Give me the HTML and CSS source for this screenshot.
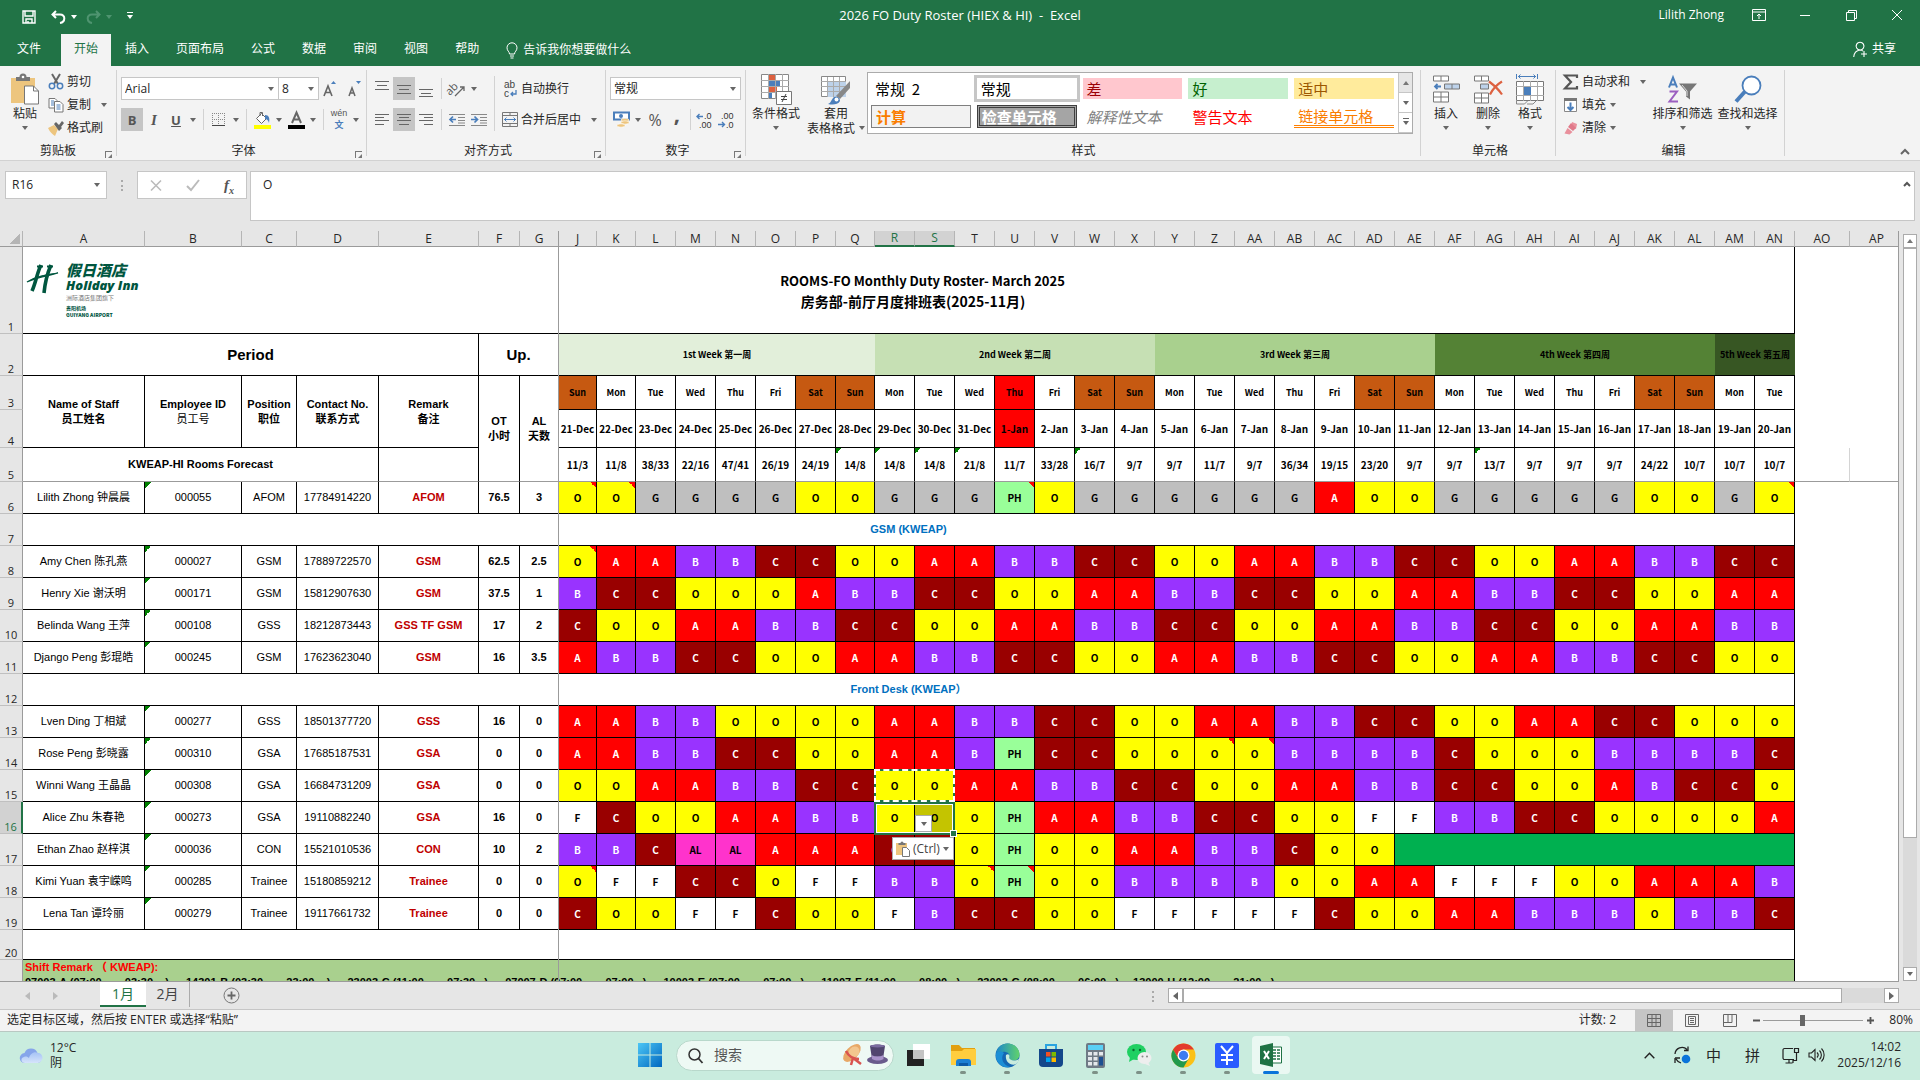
FILE: index.html
```html
<!DOCTYPE html>
<html lang="zh-CN">
<head>
    <meta charset="UTF-8">
    <meta name="viewport" content="width=device-width, initial-scale=1.0">
    <title>2026 FO Duty Roster (HIEX &amp; HI) - Excel</title>
    <link rel="stylesheet" href="styles.css">
</head>
<body>

    <header class="titlebar">
        <div class="quick">
            <button class="q-save" aria-label="保存"><svg width="14" height="14" viewBox="0 0 14 14"><path d="M1 1h12v12H1zM3 1v5h8V1M4 13V9h6v4M6 11v2" fill="none" stroke="#fff" stroke-width="1.400"/></svg></button>
            <button class="q-undo" aria-label="撤消"><svg width="15" height="14" viewBox="0 0 15 14"><path d="M5 1L1.500 4.500 5 8M2 4.500h7c6 0 5.500 7.500 0 8.500" fill="none" stroke="#fff" stroke-width="2"/></svg><i class="caret light"></i></button>
            <button class="q-redo" aria-label="恢复"><svg width="15" height="14" viewBox="0 0 15 14"><path d="M10 1l3.500 3.500L10 8M13 4.500H6c-6 0-5.500 7.500 0 8.500" fill="none" stroke="#4f9470" stroke-width="2"/></svg><i class="caret dim"></i></button>
            <button class="q-more" aria-label="自定义"><i class="caret light bar"></i></button>
        </div>
        <div class="doc-title">2026 FO Duty Roster (HIEX &amp; HI)&nbsp; -&nbsp; Excel</div>
        <div class="window-tools">
            <span class="user">Lilith Zhong</span>
            <button aria-label="功能区显示选项"><svg width="14" height="12" viewBox="0 0 14 12"><path d="M.5.5h13v11H.5zM1 3h12M7 10V5M5 7l2-2 2 2" fill="none" stroke="#fff"/></svg></button>
            <button aria-label="最小化"><svg width="10" height="10" viewBox="0 0 10 10"><path d="M0 5.500h10" stroke="#fff"/></svg></button>
            <button aria-label="还原"><svg width="11" height="11" viewBox="0 0 11 11"><path d="M.5 2.500h8v8h-8zM2.500 2V.5h8v8H9" fill="none" stroke="#fff"/></svg></button>
            <button aria-label="关闭"><svg width="10" height="10" viewBox="0 0 10 10"><path d="M0 0l10 10M10 0L0 10" stroke="#fff"/></svg></button>
        </div>
    </header>

    <nav class="tabs">
        <a href="#" class="file">文件</a>
        <a href="#" class="active">开始</a>
        <a href="#">插入</a>
        <a href="#">页面布局</a>
        <a href="#">公式</a>
        <a href="#">数据</a>
        <a href="#">审阅</a>
        <a href="#">视图</a>
        <a href="#">帮助</a>
        <a href="#" class="tell"><svg width="12" height="17" viewBox="0 0 12 17"><path d="M3.500 12c0-2.500-2.500-3-2.500-6.200a5 5 0 0 1 10 0c0 3.200-2.500 3.700-2.500 6.200zM4 14h4M4.500 16h3" fill="none" stroke="#fff"/></svg>告诉我你想要做什么</a>
        <a href="#" class="share"><svg width="15" height="17" viewBox="0 0 15 17"><path d="M7 9a3.900 3.900 0 1 1 .1 0C3 9.500 1 12 .7 16M7 9c1.300.1 2.300.5 3 1M8 13h6M11 10v6" fill="none" stroke="#fff" stroke-width="1.100"/></svg>共享</a>
    </nav>

    <section class="ribbon">
        <div class="group clipboard">
            <div class="group-body">
                <button class="big paste"><svg width="28" height="31" viewBox="0 0 28 31"><path d="M0 4h24v25H0z" fill="#edc57e"/><path d="M5 7V3h3.500a3.500 3.500 0 0 1 7 0H19v4z" fill="#777"/><circle cx="12" cy="3" r="1.300" fill="#fff"/><path d="M13.500 12h9l5 5v13h-14z" fill="#fff" stroke="#777"/><path d="M22.500 12v5h5" fill="none" stroke="#777"/></svg><span>粘贴</span><i class="caret"></i></button>
                <div class="stack">
                    <button><svg width="16" height="16" viewBox="0 0 16 16"><path d="M4 0l6 10M12 0L6 10" stroke="#666" stroke-width="2"/><circle cx="4" cy="12" r="2.700" fill="none" stroke="#4a7ebb" stroke-width="1.500"/><circle cx="12" cy="12" r="2.700" fill="none" stroke="#4a7ebb" stroke-width="1.500"/></svg>剪切</button>
                    <button><svg width="16" height="16" viewBox="0 0 16 16"><path d="M1 1.500h6l2 2V11H1z" fill="#fff" stroke="#777"/><path d="M3 4h3M3 6h3M3 8h3" stroke="#4a7ebb"/><path d="M6.500 4.500H12l3 3V15H6.500z" fill="#fff" stroke="#777"/><path d="M8.500 8h4M8.500 10h4M8.500 12h4" stroke="#4a7ebb"/></svg>复制<i class="caret far"></i></button>
                    <button><svg width="16" height="16" viewBox="0 0 16 16"><path d="M0 8l6-3 4 4-3 7c-3-2-5-4-7-8z" fill="#edc57e"/><path d="M6 4l2-2 3 3 3-4 2 2-3 4 1 1-3 3z" fill="#666"/></svg>格式刷</button>
                </div>
            </div>
            <div class="group-label">剪贴板<i class="launch"></i></div>
        </div>

        <div class="group font">
            <div class="group-body rows">
                <div class="row">
                    <select class="pick face" aria-label="字体"><option>Arial</option></select>
                    <select class="pick size" aria-label="字号"><option>8</option></select>
                    <button class="tool" aria-label="增大字号"><svg width="16" height="18" viewBox="0 0 16 18"><path d="M2 16L6 6l4 10M3.500 12.500h5" fill="none" stroke="#666" stroke-width="1.600"/><path d="M9 4l2.500-3L14 4z" fill="#4a7ebb"/></svg></button>
                    <button class="tool" aria-label="减小字号"><svg width="16" height="18" viewBox="0 0 16 18"><path d="M3 16l3-8 3 8M4 13h4" fill="none" stroke="#666" stroke-width="1.500"/><path d="M10 1h5l-2.500 3z" fill="#4a7ebb"/></svg></button>
                </div>
                <div class="row">
                    <button class="tool on b">B</button>
                    <button class="tool i">I</button>
                    <button class="tool u">U</button>
                    <button class="split" aria-label="下划线选项"><i class="caret"></i></button>
                    <i class="sep"></i>
                    <button class="tool" aria-label="边框"><svg width="14" height="14" viewBox="0 0 14 14"><path d="M.5 0v12M6.500 0v12M12.500 0v12M0 .5h13M0 6.500h13" stroke="#888" stroke-dasharray="1 1"/><path d="M0 12.500h13" stroke="#444"/></svg></button>
                    <button class="split" aria-label="边框选项"><i class="caret"></i></button>
                    <i class="sep"></i>
                    <button class="tool" aria-label="填充颜色"><svg width="17" height="18" viewBox="0 0 17 18"><path d="M2.500 7.500l5-5 5 5-5 5z" fill="#fff" stroke="#666"/><path d="M6 5V1.500h2.500V5" fill="none" stroke="#666"/><path d="M11 4c4 0 5 3 4 8-1-3-2-4-4-4z" fill="#4a7ebb"/><path d="M0 14h17v4H0z" fill="#ff0"/></svg></button>
                    <button class="split" aria-label="填充选项"><i class="caret"></i></button>
                    <button class="tool" aria-label="字体颜色"><svg width="17" height="18" viewBox="0 0 17 18"><path d="M4 12L8.500 1.500 13 12M5.500 8.500h6" fill="none" stroke="#666" stroke-width="2"/><path d="M0 14h17v4H0z"/></svg></button>
                    <button class="split" aria-label="颜色选项"><i class="caret"></i></button>
                    <i class="sep"></i>
                    <button class="tool wen"><span>wén</span><b>文</b></button>
                    <button class="split" aria-label="拼音选项"><i class="caret"></i></button>
                </div>
            </div>
            <div class="group-label">字体<i class="launch"></i></div>
        </div>

        <div class="group align">
            <div class="group-body">
                <div class="rows">
                    <div class="row">
                        <button class="tool" aria-label="顶端对齐"><svg width="14" height="16" viewBox="0 0 14 16"><path d="M0 .5h14M2 4.500h10M0 8.500h14" stroke="#666"/></svg></button>
                        <button class="tool on" aria-label="垂直居中"><svg width="14" height="16" viewBox="0 0 14 16"><path d="M0 4.500h14M2 8.500h10M0 12.500h14" stroke="#666"/></svg></button>
                        <button class="tool" aria-label="底端对齐"><svg width="14" height="16" viewBox="0 0 14 16"><path d="M0 8.500h14M2 12.500h10M0 15.500h14" stroke="#666"/></svg></button>
                        <i class="sep"></i>
                        <button class="tool" aria-label="方向"><svg width="17" height="16" viewBox="0 0 17 16"><text x="-3" y="10" transform="rotate(-45 5 8)" font-size="11" font-family="Open Sans" fill="#555">ab</text><path d="M6 15L15 6M11 6h4v4" fill="none" stroke="#666" stroke-width="1.300"/></svg></button>
                        <button class="split" aria-label="方向选项"><i class="caret"></i></button>
                    </div>
                    <div class="row">
                        <button class="tool" aria-label="左对齐"><svg width="14" height="13" viewBox="0 0 14 13"><path d="M0 1.500h14M0 4.500h9M0 7.500h14M0 11.500h9" stroke="#666"/></svg></button>
                        <button class="tool on" aria-label="居中"><svg width="14" height="13" viewBox="0 0 14 13"><path d="M0 1.500h14M2 4.500h10M0 7.500h14M2 11.500h10" stroke="#666"/></svg></button>
                        <button class="tool" aria-label="右对齐"><svg width="14" height="13" viewBox="0 0 14 13"><path d="M0 1.500h14M5 4.500h9M0 7.500h14M5 11.500h9" stroke="#666"/></svg></button>
                        <i class="sep"></i>
                        <button class="tool" aria-label="减少缩进"><svg width="16" height="14" viewBox="0 0 16 14"><path d="M0 1.500h16M9 4.500h7M9 7.500h7M0 12.500h16M9 10h7" stroke="#888"/><path d="M7 6.500H1M4 3.500l-3 3 3 3" fill="none" stroke="#4a7ebb" stroke-width="1.700"/></svg></button>
                        <button class="tool" aria-label="增加缩进"><svg width="16" height="14" viewBox="0 0 16 14"><path d="M0 1.500h16M9 4.500h7M9 7.500h7M0 12.500h16M9 10h7" stroke="#888"/><path d="M0 6.500h6M3.500 3.500l3 3-3 3" fill="none" stroke="#4a7ebb" stroke-width="1.700"/></svg></button>
                    </div>
                </div>
                <i class="sep tall"></i>
                <div class="rows">
                    <button class="text-tool"><svg width="16" height="18" viewBox="0 0 16 18"><text x="2" y="8" font-size="10" font-family="Liberation Sans" fill="#444">ab</text><text x="2" y="17" font-size="10" font-family="Liberation Sans" fill="#444">c</text><path d="M14 10v4H9M11 12l-2 2 2 2" fill="none" stroke="#4a7ebb" stroke-width="1.300"/></svg>自动换行</button>
                    <button class="text-tool"><svg width="16" height="15" viewBox="0 0 16 15"><path d="M.5.5h15v14H.5zM1 3.500h14M1 11.500h14M8 1v2M8 12v2" fill="none" stroke="#777"/><path d="M2 7.500h12M4.500 5.500l-2 2 2 2M11.500 5.500l2 2-2 2" fill="none" stroke="#4a7ebb"/></svg>合并后居中<i class="caret far"></i></button>
                </div>
            </div>
            <div class="group-label">对齐方式<i class="launch"></i></div>
        </div>

        <div class="group number">
            <div class="group-body rows">
                <div class="row"><select class="pick format" aria-label="数字格式"><option>常规</option></select></div>
                <div class="row">
                    <button class="tool" aria-label="会计数字格式"><svg width="17" height="17" viewBox="0 0 17 17"><path d="M1 1.500h15v7H1z" fill="#fff" stroke="#4a7ebb" stroke-width="2"/><circle cx="8" cy="5" r="2" fill="#4a7ebb"/><ellipse cx="12" cy="9" rx="4" ry="1.700" fill="#edc57e" stroke="#fff" stroke-width=".6"/><ellipse cx="12" cy="11.500" rx="4" ry="1.700" fill="#edc57e" stroke="#fff" stroke-width=".6"/><ellipse cx="8" cy="14.500" rx="4" ry="1.700" fill="#edc57e" stroke="#fff" stroke-width=".6"/></svg></button>
                    <button class="split" aria-label="会计选项"><i class="caret"></i></button>
                    <button class="tool pct">%</button>
                    <button class="tool comma">,</button>
                    <i class="sep slim"></i>
                    <button class="tool" aria-label="增加小数位数"><svg width="16" height="16" viewBox="0 0 16 16"><text x="8" y="7" font-size="9" font-family="Liberation Sans" fill="#333">.0</text><text x="3" y="16" font-size="9" font-family="Liberation Sans" fill="#333">.00</text><path d="M7 4.500H1M3.500 2L1 4.500 3.500 7" fill="none" stroke="#4a7ebb" stroke-width="1.400"/></svg></button>
                    <button class="tool" aria-label="减少小数位数"><svg width="16" height="16" viewBox="0 0 16 16"><text x="3" y="7" font-size="9" font-family="Liberation Sans" fill="#333">.00</text><text x="8" y="16" font-size="9" font-family="Liberation Sans" fill="#333">.0</text><path d="M0 12.500h6.500M4 10l2.500 2.500L4 15" fill="none" stroke="#4a7ebb" stroke-width="1.400"/></svg></button>
                </div>
            </div>
            <div class="group-label">数字<i class="launch"></i></div>
        </div>

        <div class="group styles">
            <div class="group-body">
                <button class="big cond"><svg width="31" height="31" viewBox="0 0 31 31"><path d="M.5.5h27v24H.5z" fill="#fff" stroke="#888"/><path d="M7 1h7v5H7zM7 12h9v6H7z" fill="#dd6140"/><path d="M7 6h12v6H7zM7 18h4v6H7z" fill="#4a7ebb"/><path d="M7.500 0v25M14.500 0v25M21.500 0v25M0 6.500h28M0 12.500h28M0 18.500h28" stroke="#aaa" fill="none"/><path d="M15.500 17.500h15v13h-15z" fill="#fff" stroke="#777"/><path d="M20 22.500h6M20 25.500h6M25 20l-4 8" stroke="#444"/></svg><span>条件格式</span><i class="caret"></i></button>
                <button class="big tablefmt"><svg width="30" height="31" viewBox="0 0 30 31"><path d="M.5 2.500h24v20H.5z" fill="#fff" stroke="#888"/><path d="M7 7h18v16H7z" fill="#bdd2ea"/><path d="M6.500 3v20M12.500 3v20M18.500 3v20M0 7.500h25M0 12.500h25M0 17.500h25" stroke="#aaa"/><path d="M29 7v7L19 25l-4-3z" fill="#888"/><path d="M7 30c3-1 3-4 6-7 4-1 6 1 6 4-2 4-8 4-12 3z" fill="#4a7ebb"/><circle cx="15.500" cy="25.500" r="2" fill="#fff"/></svg><span>套用<br>表格格式<i class="caret near"></i></span></button>
                <div class="gallery">
                    <div class="style-list">
                        <button class="st song">常规 &nbsp;2</button>
                        <button class="st picked">常规</button>
                        <button class="st bad">差</button>
                        <button class="st good">好</button>
                        <button class="st neutral">适中</button>
                        <button class="st calc">计算</button>
                        <button class="st check">检查单元格</button>
                        <button class="st explain">解释性文本</button>
                        <button class="st warn">警告文本</button>
                        <button class="st linked">链接单元格</button>
                    </div>
                    <div class="style-scroll">
                        <button class="off" aria-label="上一行"><i class="caret up"></i></button>
                        <button aria-label="下一行"><i class="caret"></i></button>
                        <button aria-label="其他"><i class="caret bar"></i></button>
                    </div>
                </div>
            </div>
            <div class="group-label">样式</div>
        </div>

        <div class="group cells">
            <div class="group-body">
                <button class="big"><svg width="27" height="28" viewBox="0 0 27 28"><g fill="#fff" stroke="#777"><path d="M.5.500h15v5H.5zM8 .5v5"/><path d="M.5 16.500h15v10H.5zM8 16.500v10M.5 21.500h15"/><path d="M11.500 8.500h15v5h-15zM19 8.500v5" fill="#bdd2ea"/></g><path d="M8 11H2M4.500 8.500L2 11l2.500 2.500" fill="none" stroke="#4a7ebb" stroke-width="1.800"/></svg><span>插入</span><i class="caret"></i></button>
                <button class="big"><svg width="29" height="28" viewBox="0 0 29 28"><g fill="#fff" stroke="#777"><path d="M.5.500h14v5H.5zM7.500 .5v5"/><path d="M.5 17.500h14v10H.5zM7.500 17.500v10M.5 22.500h14"/><path d="M6.500 8.500h8v5h-8z" fill="#bdd2ea"/></g><path d="M15 6c4 3 9 7 13 13M28 6c-5 3-9 7-12 13" fill="none" stroke="#dd6140" stroke-width="2.200"/></svg><span>删除</span><i class="caret"></i></button>
                <button class="big"><svg width="28" height="31" viewBox="0 0 28 31"><path d="M.5 0v5M21.500 0v5M2 2.500h18M4.500.5l-2 2 2 2M17.500.5l2 2-2 2" fill="none" stroke="#4a7ebb"/><path d="M.5 7.500h27v19H.5z" fill="#fff" stroke="#777"/><path d="M7.500 7v20M14.500 7v20M21.500 7v20M0 12.500h28M0 21.500h28" stroke="#aaa"/><path d="M8 13h7v8H8z" fill="#4a7ebb"/><path d="M.5 27v3h8l3-3M11 30h6l3-3" fill="none" stroke="#888"/></svg><span>格式</span><i class="caret"></i></button>
            </div>
            <div class="group-label">单元格</div>
        </div>

        <div class="group edit">
            <div class="group-body">
                <div class="stack">
                    <button><svg width="16" height="16" viewBox="0 0 16 16"><path d="M14 4V1.500H2L8 8l-6 6.500h12V12" fill="none" stroke="#555" stroke-width="2.200"/></svg>自动求和<i class="caret far"></i></button>
                    <button><svg width="16" height="16" viewBox="0 0 16 16"><path d="M1.500 1.500h12v13h-12z" fill="#fff" stroke="#888"/><path d="M1 1h13v3H1z" fill="#777"/><path d="M7.500 5.500V13M4.500 10l3 3 3-3" fill="none" stroke="#4a7ebb" stroke-width="2"/></svg>填充<i class="caret"></i></button>
                    <button><svg width="16" height="16" viewBox="0 0 16 16"><path d="M9 2l5 2-1 5-5-3z" fill="#e9909c"/><path d="M8 3l5 5-3 3-5-4z" fill="#e0798a"/><path d="M4.500 8l5 4-3 2.500-5-1z" fill="#e9909c"/></svg>清除<i class="caret"></i></button>
                </div>
                <button class="big wide"><svg width="30" height="28" viewBox="0 0 30 28"><path d="M1 12L5 2l4 10M2.500 9h5" fill="none" stroke="#4a7ebb" stroke-width="2"/><path d="M1.500 16H9L1.500 26H10" fill="none" stroke="#9b5fc0" stroke-width="2"/><path d="M11 8h18l-7 8v8l-4-3v-5z" fill="#777"/><path d="M14 9.500l5 6v5" fill="none" stroke="#ddd"/></svg><span>排序和筛选</span><i class="caret"></i></button>
                <button class="big wide"><svg width="28" height="28" viewBox="0 0 28 28"><circle cx="17.500" cy="10" r="9" fill="#fff" stroke="#4a7ebb" stroke-width="1.800"/><path d="M11 16L2 26" stroke="#4a7ebb" stroke-width="4"/></svg><span>查找和选择</span><i class="caret"></i></button>
            </div>
            <div class="group-label">编辑</div>
        </div>
        <button class="collapse" aria-label="折叠功能区"><svg width="10" height="7" viewBox="0 0 10 7"><path d="M1 6l4-4 4 4" fill="none" stroke="#666" stroke-width="2"/></svg></button>
    </section>

    <section class="formula-bar">
        <div class="name-box"><input type="text" value="R16" aria-label="名称框"><i class="caret"></i></div>
        <i class="grip"></i>
        <div class="fx-box">
            <button aria-label="取消"><svg width="12" height="11" viewBox="0 0 12 11"><path d="M1 .5l10 10M11 .5l-10 10" stroke="#bbb" stroke-width="1.600"/></svg></button>
            <button aria-label="输入"><svg width="14" height="12" viewBox="0 0 14 12"><path d="M1 7l4 4 8-10" fill="none" stroke="#bbb" stroke-width="2"/></svg></button>
            <button class="fx">f<sub>x</sub></button>
        </div>
        <div class="formula"><textarea aria-label="编辑栏">O</textarea><svg width="8" height="6" viewBox="0 0 8 6"><path d="M1 5l3-3 3 3" fill="none" stroke="#555" stroke-width="2"/></svg></div>
    </section>

    <main class="workbook">
        <div class="grid">
            <table class="sheet">
                <colgroup id="cols"></colgroup>
                <thead><tr id="letters"><th class="corner"></th></tr></thead>
                <tbody>
                    <tr class="r1">
                        <th>1</th>
                        <td class="title" colspan="38"><span class="title-en">ROOMS-FO Monthly Duty Roster- March 2025</span><br>房务部-前厅月度排班表(2025-11月)&nbsp;&nbsp;&nbsp;&nbsp;&nbsp;&nbsp;
                            <div class="logo">
                                <svg width="31" height="29" viewBox="0 0 31 29"><path d="M14 0c-4 8-5 17-9 26M24 0c-4 9-6 18-7 28" fill="none" stroke="#00563f" stroke-width="3.600"/><path d="M10 1.500h6M20 1.500h6" stroke="#00563f" stroke-width="2"/><path d="M0 17c8-6 21-8 31-9-10 3-20 4-31 9z" fill="#00563f" stroke="#00563f" stroke-width="1.200"/></svg>
                                <div><b class="cn">假日酒店</b><b class="en">Holiday Inn</b><span>洲际酒店集团旗下</span><em>贵阳机场</em><strong>GUIYANG AIRPORT</strong></div>
                            </div>
                        </td>
                        <td class="blank"></td><td class="blank"></td>
                    </tr>
                    <tr class="r2">
                        <th>2</th>
                        <td class="large" colspan="5">Period</td>
                        <td class="large" colspan="2">Up.</td>
                        <td class="week w1" colspan="8">1st Week 第一周</td>
                        <td class="week w2" colspan="7">2nd Week 第二周</td>
                        <td class="week w3" colspan="7">3rd Week 第三周</td>
                        <td class="week w4" colspan="7">4th Week 第四周</td>
                        <td class="week w5" colspan="2">5th Week 第五周</td>
                        <td class="blank"></td><td class="blank"></td>
                    </tr>
                    <tr class="r3" id="days">
                        <th>3</th>
                        <td class="head" rowspan="2">Name of Staff<br>员工姓名</td>
                        <td class="head" rowspan="2">Employee ID<br><span>员工号</span></td>
                        <td class="head" rowspan="2">Position<br>职位</td>
                        <td class="head" rowspan="2">Contact No.<br>联系方式</td>
                        <td class="head" rowspan="2">Remark<br>备注</td>
                        <td class="head line" rowspan="3">OT<br>小时</td>
                        <td class="head line" rowspan="3">AL<br>天数</td>
                    </tr>
                    <tr class="r4" id="dates"><th>4</th></tr>
                    <tr class="r5" id="forecast"><th>5</th><td class="head" colspan="4">KWEAP-HI Rooms Forecast</td><td></td></tr>
                </tbody>
                <tbody id="roster"></tbody>
            </table>
            <i class="freeze"></i>
        </div>
        <div class="vscroll">
            <button aria-label="向上"><i class="caret up"></i></button>
            <div class="track"><i class="thumb"></i></div>
            <button aria-label="向下"><i class="caret"></i></button>
        </div>
    </main>

    <section class="sheet-tabs">
        <button class="nav-arrow" aria-label="上一张"><i class="caret left"></i></button>
        <button class="nav-arrow" aria-label="下一张"><i class="caret right"></i></button>
        <a href="#" class="active">1月</a>
        <a href="#">2月</a>
        <button class="add" aria-label="新工作表"><svg width="17" height="17" viewBox="0 0 17 17"><circle cx="8.500" cy="8.500" r="7.500" fill="none" stroke="#777"/><path d="M8.500 4.500v8M4.500 8.500h8" stroke="#666" stroke-width="1.800"/></svg></button>
        <i class="grip"></i>
        <div class="hscroll">
            <button aria-label="向左"><i class="caret left"></i></button>
            <div class="track"><i class="thumb"></i></div>
            <button aria-label="向右"><i class="caret right"></i></button>
        </div>
    </section>

    <footer class="status">
        <span class="message">选定目标区域，然后按 ENTER 或选择“粘贴”</span>
        <span class="count">计数: 2</span>
        <button class="view on" aria-label="普通"><svg width="14" height="13" viewBox="0 0 14 13"><path d="M.5.500h13v12H.5zM5 0v13M9 0v13M0 4.500h14M0 8.500h14" fill="none" stroke="#666"/></svg></button>
        <button class="view" aria-label="页面布局"><svg width="14" height="13" viewBox="0 0 14 13"><path d="M.5.500h13v12H.5zM3.500 2.500h7v8h-7zM5 4.500h4M5 6.500h4M5 8.500h4" fill="none" stroke="#666"/></svg></button>
        <button class="view" aria-label="分页预览"><svg width="14" height="13" viewBox="0 0 14 13"><path d="M.5.500h13v12H.5zM5 0v8M9 0v8.500M1 8.500h8" fill="none" stroke="#666"/></svg></button>
        <button class="zoom-btn" aria-label="缩小"><svg width="7" height="7" viewBox="0 0 7 7"><path d="M0 3.500h7" stroke="#555" stroke-width="2"/></svg></button>
        <input type="range" min="10" max="124" value="55" aria-label="显示比例">
        <button class="zoom-btn" aria-label="放大"><svg width="7" height="7" viewBox="0 0 7 7"><path d="M0 3.500h7M3.500 0v7" stroke="#555" stroke-width="1.800"/></svg></button>
        <span class="percent">80%</span>
    </footer>

    <div class="taskbar">
        <div class="weather">
            <svg width="25" height="17" viewBox="0 0 25 17"><defs><linearGradient id="cl" x2="0" y2="1"><stop stop-color="#a6c3f5"/><stop offset="1" stop-color="#d6e4fb"/></linearGradient></defs><path d="M6 16a5 5 0 0 1-.5-10A7 7 0 0 1 18.500 6 5.200 5.200 0 0 1 19 16z" fill="#86a5ea"/><path d="M6 16c-4 0-5-5-1-6 2-1 4 0 5 1 1-4 5-7 9-5 5 0 7 8 0 10z" fill="url(#cl)"/></svg>
            <span>12°C<br>阴</span>
        </div>
        <div class="apps">
            <button aria-label="开始"><svg width="24" height="24" viewBox="0 0 24 24"><defs><linearGradient id="win" x2="1" y2="1"><stop stop-color="#4cc6f5"/><stop offset="1" stop-color="#0067c0"/></linearGradient></defs><path d="M0 0h11.500v11.500H0zM12.500 0H24v11.500H12.500zM0 12.500h11.500V24H0zM12.500 12.500H24V24H12.500z" fill="url(#win)"/></svg></button>
            <label class="search"><svg width="15" height="15" viewBox="0 0 15 15"><circle cx="6.500" cy="6.500" r="5.500" fill="none" stroke="#333" stroke-width="1.500"/><path d="M10.500 10.500L14.500 15" stroke="#333" stroke-width="1.800"/></svg><input type="text" placeholder="搜索">
                <svg width="46" height="22" viewBox="0 0 46 22"><ellipse cx="10" cy="9" rx="11" ry="6" transform="rotate(-45 10 9)" fill="#e8a867"/><ellipse cx="12" cy="8" rx="6" ry="5" transform="rotate(-45 12 8)" fill="#f3c68e"/><path d="M4 7c3 6 7 8 13 8M11 14l-2 7M11 14l8 6" fill="none" stroke="#d9534f" stroke-width="2.500"/><path d="M28 2c4-2 11-2 15 0l-2 13H30z" fill="#51456e"/><ellipse cx="35.500" cy="16" rx="10.500" ry="4" fill="#6a5b8c"/><path d="M29.500 11c4 2 8 2 12 0v4c-4 2-7 2-11.500 0z" fill="#a892c9"/><ellipse cx="35.500" cy="2" rx="7.500" ry="1.500" fill="#7a6a9e"/></svg>
            </label>
            <button class="app" aria-label="任务视图"><svg width="24" height="24" viewBox="0 0 24 24"><path d="M0 7h17v16H0z" fill="#222"/><path d="M6 1h17v15H6z" fill="#fff"/><path d="M6 7h11v9H6z" fill="#c4c4c4"/></svg></button>
            <button class="app run" aria-label="资源管理器"><svg width="25" height="23" viewBox="0 0 25 23"><path d="M0 1h8l3 3h13v5H0z" fill="#e2a010"/><path d="M0 7h11l2-2h12v16H0z" fill="#ffcd3e"/><path d="M5 22v-4a3 3 0 0 1 3-3h9a3 3 0 0 1 3 3v4z" fill="#1b80d4"/><path d="M8 19h9v3H8z" fill="#0c5aa6"/></svg></button>
            <button class="app run" aria-label="Edge"><svg width="25" height="25" viewBox="0 0 25 25"><defs><linearGradient id="ed" x2="1"><stop stop-color="#1b86cc"/><stop offset="1" stop-color="#61d36b"/></linearGradient></defs><circle cx="12.500" cy="12.500" r="12" fill="#1467b3"/><path d="M1 11C2 4 7 .5 12.500.5c7 0 12 5 12 11 0 4-3 6-6 6-4 0-5-2-4-4C15 10 10 6 1 11z" fill="url(#ed)"/><path d="M11 12c2-2 4 0 3.500 1.500-1 2 1 4 4.500 4 2 0 4-.5 5-2 0 3-2 5-4 6-6 1-10-4-9-9.500z" fill="#c9ecde"/><path d="M9 10c-4 5-1 12 6 14-8 2-15-5-14-13 2-3 5-3 8-1z" fill="#1c8fd6"/></svg></button>
            <button class="app" aria-label="Store"><svg width="24" height="24" viewBox="0 0 24 24"><path d="M7 7V2h10v5" fill="none" stroke="#2ba4e0" stroke-width="2"/><path d="M0 6h24v14a4 4 0 0 1-4 4H4a4 4 0 0 1-4-4z" fill="#14478a"/><path d="M7 9h4.500v4.500H7z" fill="#f25022"/><path d="M12.500 9H17v4.500h-4.500z" fill="#7fba00"/><path d="M7 14.500h4.500V19H7z" fill="#00a4ef"/><path d="M12.500 14.500H17V19h-4.500z" fill="#ffb900"/></svg></button>
            <button class="app run" aria-label="计算器"><svg width="19" height="25" viewBox="0 0 19 25"><rect width="19" height="25" rx="2" fill="#6f7a85"/><path d="M2 2h15v5H2z" fill="#5ad0f5"/><path d="M2 9h4v3.500H2zM7.500 9h4v3.500h-4zM13 9h4v3.500h-4zM2 14h4v3.500H2zM7.500 14h4v3.500h-4zM2 19h4v3.500H2zM7.500 19h4v3.500h-4z" fill="#e4e8ec"/><path d="M13 14h4v8.500h-4z" fill="#1d4f91"/></svg></button>
            <button class="app run" aria-label="微信"><svg width="25" height="22" viewBox="0 0 25 22"><ellipse cx="9.500" cy="8" rx="9.500" ry="8" fill="#1fd062"/><path d="M3 13l-1 5 5-3z" fill="#1fd062"/><circle cx="6.500" cy="6" r="1.200" fill="#0a6b30"/><circle cx="13" cy="6" r="1.200" fill="#0a6b30"/><ellipse cx="17.500" cy="14" rx="7" ry="6" fill="#eee"/><path d="M21 18l2 4-5-2z" fill="#eee"/><circle cx="15.500" cy="12.500" r="1" fill="#888"/><circle cx="20" cy="12.500" r="1" fill="#888"/></svg></button>
            <button class="app run" aria-label="Chrome"><svg width="25" height="25" viewBox="0 0 25 25"><circle cx="12.500" cy="12.500" r="12" fill="#fbc116"/><path d="M2.100 6.500A12 12 0 0 1 22.900 6.500H12.500L7.300 15.500z" fill="#e33b2e"/><path d="M2.100 6.500A12 12 0 0 0 12.500 24.500L17.700 15.500 7.300 15.500z" fill="#229a4c"/><circle cx="12.500" cy="12.500" r="6" fill="#fff"/><circle cx="12.500" cy="12.500" r="4.700" fill="#3c7cf0"/></svg></button>
            <button class="app run" aria-label="财务"><svg width="24" height="25" viewBox="0 0 24 25"><rect width="24" height="25" rx="2" fill="#2a5cff"/><path d="M6 3l6 7 6-7M6 12h12M6 17h12M12 10v12" fill="none" stroke="#fff" stroke-width="2"/></svg></button>
            <button class="app current" aria-label="Excel"><svg width="22" height="24" viewBox="0 0 22 24"><path d="M11 4h10.500v16H11z" fill="#fff" stroke="#1f7244"/><path d="M13 7h7M13 10h7M13 13h7M13 16h7" stroke="#1f7244" stroke-width="1.600"/><path d="M16.500 5v14" stroke="#fff"/><path d="M0 3l13-3v24L0 21z" fill="#1f7244"/><path d="M4 8l5 8M9 8l-5 8" stroke="#fff" stroke-width="2"/></svg></button>
        </div>
        <div class="tray">
            <svg width="11" height="7" viewBox="0 0 11 7"><path d="M.7 6.300L5.500 1.200l4.800 5.100" fill="none" stroke="#222" stroke-width="1.400"/></svg>
            <svg class="sync" width="18" height="18" viewBox="0 0 18 18"><path d="M2 8a7 7 0 0 1 12-4.500M15 .5v4h-4M2 12v5M2 12h5M3 13c1 2 2.500 3 5 4" fill="none" stroke="#222" stroke-width="1.300"/><circle cx="13" cy="13" r="4.300" fill="#0a74da"/></svg>
            <span class="ime">中</span>
            <span class="ime">拼</span>
            <svg class="net" width="18" height="17" viewBox="0 0 18 17"><path d="M11 1.500H2.500A1.500 1.500 0 0 0 1 3v8a1.500 1.500 0 0 0 1.500 1.500H12M7 13v3M3.500 16h7M12.500 1.500h4v4h-4zM14.500 6v7.500H11V16" fill="none" stroke="#222" stroke-width="1.200"/></svg>
            <svg width="17" height="14" viewBox="0 0 17 14"><path d="M1 5v4h2.500L7 12.500v-11L3.500 5zM9 4.500c1.500 1.500 1.500 3.500 0 5M11.500 2.500c2.500 2.500 2.500 6.500 0 9M13.500.5c3.500 3.500 3.500 9.500 0 13" fill="none" stroke="#222" stroke-width="1.100"/></svg>
            <span class="clock">14:02<br>2025/12/16</span>
        </div>
    </div>

    <script src="script.js"></script>
</body>
</html>
```
FILE: styles.css
```css
* {
    margin: 0;
    padding: 0;
    box-sizing: border-box;
}

body {
    height: 100vh;
    display: flex;
    flex-direction: column;
    overflow: hidden;
    background-color: #e6e6e6;
    color: #262626;
    font-family: 'Open Sans', 'Noto Sans CJK SC', sans-serif;
    font-size: 12px;
    line-height: 16px;
}

button, select, input, textarea {
    font: inherit;
    color: inherit;
    background: none;
    border: none;
    outline: none;
}

a {
    color: inherit;
    text-decoration: none;
}

svg {
    display: block;
    flex: none;
    overflow: visible;
}

/* Flechas pequeñas de los menús */
.caret {
    display: inline-block;
    flex: none;
    border: 3px solid transparent;
    border-top: 4px solid #666;
    border-bottom: 0;
}

.caret.light {
    border-top-color: #fff;
}

.caret.dim {
    border-top-color: #4f9470;
}

.caret.up {
    border-top: 0;
    border-bottom: 4px solid #777;
}

.caret.left {
    border: 4px solid transparent;
    border-left: 0;
    border-right: 5px solid #666;
}

.caret.right {
    border: 4px solid transparent;
    border-right: 0;
    border-left: 5px solid #666;
}

.caret.bar {
    position: relative;
}

.caret.bar::before {
    content: '';
    position: absolute;
    left: -3px;
    top: -7px;
    width: 6px;
    height: 1px;
    background-color: currentColor;
}

/* Barra de título */
.titlebar {
    display: grid;
    grid-template-columns: 1fr auto 1fr;
    align-items: center;
    height: 34px;
    flex: none;
    padding-bottom: 4px;
    background-color: #217346;
    color: #fff;
}

.quick {
    display: flex;
    align-items: center;
    gap: 15px;
    padding: 3px 0 0 22px;
}

.quick button {
    display: flex;
    align-items: center;
    gap: 5px;
    color: #fff;
}

.quick .q-redo {
    margin-left: -6px;
}

.doc-title {
    font-size: 13px;
    white-space: nowrap;
}

.window-tools {
    display: flex;
    align-items: center;
    justify-content: flex-end;
}

.window-tools .user {
    margin-right: 12px;
}

.window-tools button {
    display: flex;
    justify-content: center;
    width: 46px;
}

/* Pestañas */
.tabs {
    display: flex;
    align-items: center;
    gap: 1px;
    height: 32px;
    flex: none;
    background-color: #217346;
    color: #fff;
}

.tabs a {
    display: flex;
    align-items: center;
    justify-content: center;
    height: 32px;
    padding: 0 13px 2px;
}

.tabs .file {
    padding: 0 19px 2px 17px;
}

.tabs .active {
    background-color: #f3f3f3;
    color: #217346;
}

.tabs .tell {
    gap: 5px;
    padding: 0 13px;
}

.tabs .share {
    gap: 4px;
    margin-left: auto;
    padding-right: 24px;
}

/* Cinta de opciones */
.ribbon {
    display: flex;
    height: 95px;
    flex: none;
    background-color: #f3f3f3;
    border-bottom: 1px solid #d2d2d2;
}

.group {
    display: flex;
    flex-direction: column;
    flex: none;
    margin: 4px 0;
    border-right: 1px solid #d2d2d2;
}

.group-body {
    display: flex;
    height: 73px;
}

.group-label {
    position: relative;
    text-align: center;
    line-height: 16px;
    margin-bottom: -3px;
}

.launch {
    position: absolute;
    right: 4px;
    bottom: 1px;
    width: 7px;
    height: 7px;
    border: 1px solid #777;
    border-right: 0;
    border-bottom: 0;
}

.launch::after {
    content: '';
    position: absolute;
    right: 0;
    bottom: 0;
    border: 2px solid #777;
    border-top-color: transparent;
    border-left-color: transparent;
}

.clipboard { width: 117px; }
.font { width: 250px; padding-left: 4px; }
.align { width: 239px; padding-left: 4px; }
.number { width: 140px; padding-left: 4px; }
.styles { width: 675px; padding-left: 1px; }
.cells { width: 135px; padding-left: 4px; }
.edit { width: 229px; padding-left: 7px; }

.big {
    display: flex;
    flex-direction: column;
    align-items: center;
    width: 42px;
    padding-top: 4px;
    line-height: 15px;
    white-space: nowrap;
}

.big svg {
    height: 31px;
    margin-bottom: 1px;
}

.big > .caret {
    margin-top: 5px;
}

.big.wide { width: 65px; }
.big.cond { width: 58px; }
.big.tablefmt { width: 62px; }

.big.paste {
    width: 48px;
    padding-left: 2px;
}

.near {
    margin: 0 0 3px 4px;
}

.stack {
    display: flex;
    flex-direction: column;
    width: 68px;
}

.edit .stack {
    width: 87px;
}

.stack button {
    display: flex;
    align-items: center;
    gap: 3px;
    height: 23px;
    white-space: nowrap;
}

.stack .caret {
    margin-left: 1px;
}

.stack .far {
    margin-left: 7px;
}

.rows {
    display: flex;
    flex-direction: column;
    gap: 8px;
    padding-top: 7px;
}

.row {
    display: flex;
    align-items: center;
    height: 23px;
}

.pick {
    height: 23px;
    padding: 0 3px;
    appearance: none;
    border: 1px solid #c6c6c6;
    background: #fff url("data:image/svg+xml,%3Csvg xmlns='http://www.w3.org/2000/svg' width='6' height='4'%3E%3Cpath d='M0 0h6L3 4z' fill='%23666'/%3E%3C/svg%3E") no-repeat right 4px center;
}

.face { width: 158px; }
.size { width: 40px; border-left: 0; }
.format { width: 131px; }

.tool {
    display: flex;
    align-items: center;
    justify-content: center;
    width: 22px;
    height: 23px;
    color: #555;
}

.size + .tool + .tool {
    margin-left: 2px;
}

.on {
    background-color: #c5c5c5;
}

.b { font-weight: bold; font-size: 13px; }
.i { font-style: italic; font-family: 'Liberation Serif', serif; font-size: 15px; font-weight: bold; }
.u { font-weight: bold; text-decoration: underline; font-size: 13px; }

.split {
    display: flex;
    align-items: center;
    justify-content: center;
    width: 12px;
    height: 23px;
}

.sep {
    width: 1px;
    height: 21px;
    margin: 0 4px;
    background-color: #d2d2d2;
}

.sep.slim {
    margin: 0 2px;
}

.sep.tall {
    height: 55px;
    margin-top: 6px;
}

.wen {
    flex-direction: column;
    font-family: 'Liberation Sans', 'Noto Sans CJK SC', sans-serif;
    font-size: 9px;
    line-height: 11px;
}

.wen b {
    color: #4a7ebb;
    line-height: 12px;
}

.pct {
    font-size: 16px;
}

.comma {
    padding-bottom: 14px;
    font-size: 22px;
    font-weight: bold;
}

.text-tool {
    display: flex;
    align-items: center;
    gap: 3px;
    height: 23px;
    padding-left: 3px;
    white-space: nowrap;
}

.text-tool .far {
    margin-left: 7px;
}

/* Galería de estilos */
.gallery {
    display: flex;
    width: 546px;
    height: 62px;
    margin-top: 2px;
    border: 1px solid #ababab;
    background-color: #fff;
}

.style-list {
    display: grid;
    grid-template-columns: repeat(5, 1fr);
    gap: 6px;
    flex: 1;
    padding: 5px 4px 5px 3px;
}

.st {
    padding-left: 4px;
    font-family: 'Noto Sans CJK SC', sans-serif;
    font-size: 15px;
    line-height: 20px;
    text-align: left;
    white-space: nowrap;
    color: #000;
}

.picked { outline: 3px solid #c6c6c6; }
.bad { background-color: #ffc7ce; color: #9c0006; }
.good { background-color: #c6efce; color: #006100; }
.neutral { background-color: #ffeb9c; color: #9c5700; }
.calc { background-color: #f2f2f2; border: 1px solid #7f7f7f; color: #fa7d00; font-weight: bold; line-height: 18px; }
.check { background-color: #a5a5a5; border: 3px double #3f3f3f; color: #fff; font-weight: bold; line-height: 16px; padding-left: 2px; }
.explain { color: #7f7f7f; font-style: italic; }
.warn { color: #f00; }
.linked { color: #fa7d00; border-bottom: 3px double #ff8001; line-height: 17px; }

.style-scroll {
    display: flex;
    flex-direction: column;
    width: 14px;
}

.style-scroll button {
    flex: 1;
    display: flex;
    align-items: center;
    justify-content: center;
    border-left: 1px solid #c6c6c6;
    border-bottom: 1px solid #c6c6c6;
    color: #666;
}

.style-scroll .off {
    background-color: #e6e6e6;
}

.collapse {
    align-self: flex-end;
    margin: 0 10px 5px auto;
}

/* Barra de fórmulas */
.formula-bar {
    display: flex;
    align-items: flex-start;
    height: 70px;
    flex: none;
    padding: 10px 5px 0;
}

.name-box, .fx-box {
    display: flex;
    align-items: center;
    height: 28px;
    background-color: #fff;
    border: 1px solid #c6c6c6;
}

.name-box {
    width: 102px;
    padding: 0 6px;
}

.name-box input {
    flex: 1;
    min-width: 0;
}

.grip {
    width: 2px;
    height: 11px;
    margin: 9px 14px;
    border-left: 2px dotted #aaa;
}

.fx-box {
    justify-content: space-around;
    width: 110px;
    margin-right: 3px;
}

.fx {
    font-family: 'Liberation Serif', serif;
    font-style: italic;
    font-weight: bold;
    font-size: 15px;
    color: #555;
}

.fx sub {
    font-size: 10px;
    line-height: 0;
}

.formula {
    display: flex;
    flex: 1;
    height: 50px;
    padding: 5px 3px 5px 12px;
    background-color: #fff;
    border: 1px solid #c6c6c6;
}

.formula textarea {
    flex: 1;
    resize: none;
}

.formula svg {
    margin-top: 4px;
}

/* Hoja */
.workbook {
    display: flex;
    flex: 1;
    min-height: 0;
}

.grid {
    position: relative;
    flex: 1;
    overflow: hidden;
    background-color: #fff;
    border-right: 1px solid #9b9b9b;
    border-bottom: 1px solid #9b9b9b;
}

.freeze {
    position: absolute;
    left: 558px;
    top: 0;
    bottom: 0;
    width: 1px;
    background-color: #9b9b9b;
}

.sheet {
    width: calc(100% + 6px);
    table-layout: fixed;
    border-collapse: separate;
    border-spacing: 0;
    font-family: 'Liberation Sans', 'Noto Sans CJK SC', sans-serif;
    font-size: 11px;
    line-height: 15px;
    text-align: center;
    color: #000;
}

.c-row { width: 23px; }
.c-a { width: 122px; }
.c-b { width: 97px; }
.c-c { width: 55px; }
.c-d { width: 82px; }
.c-e { width: 100px; }
.c-f { width: 41px; }
.c-g { width: 39px; }
.c-j { width: 38px; }
.c-short { width: 39px; }
.c-day { width: 40px; }
.c-ao { width: 55px; }

.sheet th {
    font-family: 'Open Sans', sans-serif;
    font-size: 12px;
    font-weight: normal;
    color: #262626;
    background-color: #e6e6e6;
}

.sheet thead th {
    height: 16px;
    line-height: 14px;
    border-right: 1px solid #b5b5b5;
    border-bottom: 1px solid #9b9b9b;
}

.sheet thead .sel {
    background-color: #d2d2d2;
    border-bottom: 2px solid #217346;
    color: #217346;
}

.sheet thead .corner {
    background-image: linear-gradient(to bottom right, transparent 50%, #b5b5b5 50%);
    background-size: 10px 10px;
    background-repeat: no-repeat;
    background-position: right 2px bottom 2px;
}

.sheet tbody th {
    font-size: 11px;
    line-height: 12px;
    vertical-align: bottom;
    border-right: 1px solid #9b9b9b;
    border-bottom: 1px solid #c0c0c0;
}

.sheet tbody .sel {
    background-color: #d2d2d2;
    border-right: 2px solid #217346;
    color: #217346;
}

.sheet td {
    height: 32px;
    border-right: 1px solid #000;
    border-bottom: 1px solid #000;
    white-space: nowrap;
}

.sheet .blank {
    border: 0;
}

.sheet .r1 td { height: 87px; }
.sheet .r2 td { height: 42px; }
.sheet .r3 th { height: 34px; }
.sheet .r4 th { height: 38px; }
.sheet .r5 th { height: 34px; }
.sheet .r3 td, .sheet .r4 td, .sheet .r5 td { height: auto; }
.sheet .r5 td, .sheet .r3 .line { border-bottom-color: #9b9b9b; }
.sheet .r5 .blank { border-bottom: 1px solid #9b9b9b; }
.sheet .r5 .ao { border-right: 1px solid #d4d4d4; }
.sheet .r20 td { height: 30px; }

.sheet .title {
    position: relative;
    padding-left: 28px;
    font-family: 'Noto Sans CJK SC', sans-serif;
    font-size: 14px;
    font-weight: bold;
    line-height: 20px;
}

.title-en {
    font-size: 13px;
}

.logo {
    position: absolute;
    left: 4px;
    top: 14px;
    display: flex;
    gap: 8px;
    text-align: left;
    color: #00563f;
}

.logo svg {
    margin-top: 4px;
}

.logo div {
    display: flex;
    flex-direction: column;
}

.logo .cn {
    font-size: 15px;
    font-style: italic;
    line-height: 17px;
}

.logo .en {
    font-family: 'Open Sans', sans-serif;
    font-size: 13px;
    font-style: italic;
    line-height: 14px;
}

.logo span {
    font-size: 6px;
    font-weight: normal;
    line-height: 12px;
    color: #777;
}

.logo em, .logo strong {
    font-size: 5px;
    font-style: normal;
    line-height: 7px;
}

.large {
    font-size: 15px;
    font-weight: bold;
}

.head {
    font-weight: bold;
}

.head span {
    font-weight: normal;
}

.week, .day {
    font-family: 'Noto Sans CJK SC', sans-serif;
    font-size: 9px;
    font-weight: bold;
}

.sheet .week {
    border-right: 0;
}

.w1 { background-color: #e2efda; }
.w2 { background-color: #c6e0b4; }
.w3 { background-color: #a9d08e; }
.w4 { background-color: #548235; }
.w5 { background-color: #375623; }

.date, .fc, .shift {
    font-family: 'Noto Sans CJK SC', sans-serif;
    font-size: 10px;
    font-weight: bold;
}

.weekend { background-color: #c65911; }
.holiday { background-color: #f00; }

.remark {
    font-weight: bold;
    color: #c00000;
}

.num {
    font-weight: bold;
}

.section {
    font-weight: bold;
    color: #0070c0;
}

.s-O { background-color: #ff0; }
.s-A { background-color: #f00; color: #fff; }
.s-B { background-color: #93f; color: #fff; }
.s-C { background-color: #900; color: #fff; }
.s-G { background-color: #bfbfbf; }
.s-PH { background-color: #9f9; }
.s-AL { background-color: #f3c; }
.left-team { background-color: #00b050; }

/* Esquinas: rojo comentario, verde error */
.note {
    background-image: linear-gradient(to top right, transparent 50%, #f00 50%);
    background-size: 6px 6px;
    background-repeat: no-repeat;
    background-position: top right;
}

.err {
    background-image: linear-gradient(to bottom right, #008000 50%, transparent 50%);
    background-size: 6px 6px;
    background-repeat: no-repeat;
    background-position: top left;
}

.sheet .remarks {
    height: 60px;
    padding-left: 2px;
    vertical-align: top;
    text-align: left;
    font-weight: bold;
    background-color: #a9d08e;
    overflow: hidden;
    white-space: pre;
}

.remarks b {
    display: block;
    color: #f00;
}

/* Selección y copia */
.anchor {
    position: relative;
}

.dim-cell {
    background-color: #c4c400;
}

.ants, .selection {
    position: absolute;
    left: -1px;
    width: 81px;
    height: 33px;
    z-index: 2;
    border: 2px solid #217346;
}

.ants {
    top: -1px;
}

.ants::after {
    content: '';
    position: absolute;
    inset: -2px;
    border: 2px dashed #fff;
}

.selection {
    top: 0;
    box-shadow: inset 0 0 0 1px #fff;
}

.selection::after {
    content: '';
    position: absolute;
    right: -4px;
    bottom: -4px;
    width: 5px;
    height: 5px;
    background-color: #217346;
    border: 1px solid #fff;
    box-sizing: content-box;
}

.drop {
    position: absolute;
    left: 40px;
    top: 13px;
    z-index: 3;
    display: flex;
    align-items: center;
    justify-content: center;
    width: 17px;
    height: 17px;
    background-color: #fff;
    border: 1px solid #ababab;
}

.paste-options {
    position: absolute;
    left: 17px;
    top: 35px;
    z-index: 3;
    display: flex;
    align-items: center;
    gap: 3px;
    width: 62px;
    height: 23px;
    padding-left: 3px;
    background-color: #fff;
    border: 1px solid #ababab;
    font-family: 'Open Sans', sans-serif;
    font-size: 12px;
    font-weight: normal;
    color: #444;
}

/* Barras de desplazamiento */
.vscroll {
    display: flex;
    flex-direction: column;
    width: 21px;
    padding: 3px 3px 1px 4px;
}

.vscroll button, .hscroll button {
    display: flex;
    align-items: center;
    justify-content: center;
    flex: none;
    width: 14px;
    height: 14px;
    background-color: #fff;
    border: 1px solid #ababab;
}

.track {
    flex: 1;
    display: flex;
    background-color: #dadada;
}

.thumb {
    background-color: #fff;
    border: 1px solid #ababab;
}

.vscroll .thumb {
    width: 14px;
    height: 82%;
}

.sheet-tabs {
    display: flex;
    align-items: flex-start;
    height: 28px;
    flex: none;
    padding: 0 21px 0 25px;
    border-bottom: 1px solid #c6c6c6;
}

.sheet-tabs a {
    width: 46px;
    height: 25px;
    font-size: 14px;
    line-height: 24px;
    text-align: center;
    color: #444;
}

.sheet-tabs .active {
    margin-left: 19px;
    background-color: #fff;
    border-bottom: 2px solid #217346;
    color: #217346;
}

.sheet-tabs .active + a {
    width: 44px;
    border-right: 1px solid #ababab;
}

.nav-arrow {
    width: 28px;
    height: 27px;
    text-align: left;
}

.nav-arrow .caret {
    opacity: .35;
}

.add {
    margin: 5px 0 0 33px;
}

.sheet-tabs .grip {
    margin-left: auto;
}

.hscroll {
    display: flex;
    width: 39%;
    height: 15px;
    margin-top: 6px;
}

.hscroll button {
    height: 15px;
    width: 15px;
}

.hscroll .thumb {
    width: 94%;
}

.status {
    display: flex;
    align-items: center;
    height: 22px;
    flex: none;
    padding: 0 7px;
    background-color: #f3f3f3;
    border-bottom: 1px solid #b9c8c2;
}

.message {
    margin-right: auto;
}

.message, .count, .percent {
    padding-bottom: 2px;
}

.count {
    margin-right: 19px;
}

.view {
    display: flex;
    align-items: center;
    justify-content: center;
    width: 38px;
    height: 21px;
}

.zoom-btn {
    display: flex;
    justify-content: center;
    width: 14px;
}

.status input {
    appearance: none;
    width: 100px;
    height: 1px;
    background-color: #9b9b9b;
}

.status input::-webkit-slider-thumb {
    appearance: none;
    width: 5px;
    height: 11px;
    background-color: #666;
}

.percent {
    width: 36px;
    text-align: right;
}

/* Barra de tareas */
.taskbar {
    display: grid;
    grid-template-columns: 1fr auto 1fr;
    align-items: center;
    height: 48px;
    flex: none;
    padding: 0 19px 2px;
    background-color: #c9ecde;
}

.weather {
    display: flex;
    align-items: center;
    gap: 6px;
    line-height: 15px;
}

.apps {
    display: flex;
    align-items: center;
    margin-left: 8px;
}

.search {
    display: flex;
    align-items: center;
    width: 218px;
    height: 31px;
    margin: 0 3px 0 14px;
    padding: 0 5px 0 11px;
    border-radius: 16px;
    background-color: #eef9f4;
    border: 1px solid #b8d8cb;
}

.search input {
    flex: 1;
    min-width: 0;
    padding-left: 11px;
    font-size: 14px;
}

.search input::placeholder {
    color: #555;
}

.app {
    position: relative;
    display: flex;
    align-items: center;
    justify-content: center;
    width: 44px;
    height: 38px;
}

.run::after, .current::after {
    content: '';
    position: absolute;
    bottom: 0;
    width: 6px;
    height: 3px;
    border-radius: 2px;
    background-color: #7d9187;
}

.current {
    width: 38px;
    margin-left: 3px;
    border-radius: 4px;
    background-color: #eaf8f2;
}

.current::after {
    width: 16px;
    background-color: #0a74da;
}

.tray {
    display: flex;
    align-items: center;
    justify-content: flex-end;
}

.sync {
    margin-left: 18px;
}

.ime {
    margin-left: 15px;
    font-size: 15px;
}

.ime + .ime {
    margin-left: 24px;
}

.net {
    margin: 0 8px 0 22px;
}

.clock {
    width: 76px;
    text-align: right;
}
```
FILE: script.js
```js
const letters = 'A B C D E F G J K L M N O P Q R S T U V W X Y Z AA AB AC AD AE AF AG AH AI AJ AK AL AM AN AO AP'.split(' ');
const widths = { A: 'a', B: 'b', C: 'c', D: 'd', E: 'e', F: 'f', G: 'g', J: 'j', K: 'short', Q: 'short', AO: 'ao', AP: 'rest' };
const dayLetters = letters.slice(7, 38);

const forecast = '11/3 11/8 38/33 22/16 47/41 26/19 24/19 14/8 14/8 14/8 21/8 11/7 33/28 16/7 9/7 9/7 11/7 9/7 36/34 19/15 23/20 9/7 9/7 13/7 9/7 9/7 9/7 24/22 10/7 10/7 10/7'.split(' ');
const forecastErrors = ['Q', 'R', 'S', 'T', 'W', 'AG'];

const rows = [
    { n: 6, name: 'Lilith Zhong 钟晨晨', id: '000055', pos: 'AFOM', tel: '17784914220', remark: 'AFOM', ot: '76.5', al: '3', notes: 'J K U AN',
      shifts: 'O O G G G G O O G G G PH O G G G G G G A O O G G G G G O O G O' },
    { n: 7, section: 'GSM (KWEAP)' },
    { n: 8, name: 'Amy Chen 陈孔燕', id: '000027', pos: 'GSM', tel: '17889722570', remark: 'GSM', ot: '62.5', al: '2.5', notes: 'J',
      shifts: 'O A A B B C C O O A A B B C C O O A A B B C C O O A A B B C C' },
    { n: 9, name: 'Henry Xie 谢沃明', id: '000171', pos: 'GSM', tel: '15812907630', remark: 'GSM', ot: '37.5', al: '1',
      shifts: 'B C C O O O A B B C C O O A A B B C C O O A A B B C C O O A A' },
    { n: 10, name: 'Belinda Wang 王萍', id: '000108', pos: 'GSS', tel: '18212873443', remark: 'GSS TF GSM', ot: '17', al: '2',
      shifts: 'C O O A A B B C C O O A A B B C C O O A A B B C C O O A A B B' },
    { n: 11, name: 'Django Peng 彭琨皓', id: '000245', pos: 'GSM', tel: '17623623040', remark: 'GSM', ot: '16', al: '3.5',
      shifts: 'A B B C C O O A A B B C C O O A A B B C C O O A A B B C C O O' },
    { n: 12, section: 'Front Desk (KWEAP）' },
    { n: 13, name: 'Lven Ding 丁相斌', id: '000277', pos: 'GSS', tel: '18501377720', remark: 'GSS', ot: '16', al: '0',
      shifts: 'A A B B O O O O A A B B C C O O A A B B C C O O A A C C O O O' },
    { n: 14, name: 'Rose Peng 彭晓露', id: '000310', pos: 'GSA', tel: '17685187531', remark: 'GSA', ot: '0', al: '0', notes: 'Z AA',
      shifts: 'A A B B C C O O A A B PH C C O O O O B B B B C O O O B B B B C' },
    { n: 15, name: 'Winni Wang 王晶晶', id: '000308', pos: 'GSA', tel: '16684731209', remark: 'GSA', ot: '0', al: '0',
      shifts: 'O O A A B B C C O O A A B B C C O O A A B B C C O O A B C C O' },
    { n: 16, name: 'Alice Zhu 朱春艳', id: '000273', pos: 'GSA', tel: '19110882240', remark: 'GSA', ot: '16', al: '0',
      shifts: 'F C O O A A B B O O O PH A A B B C C O O F F B B C C O O O O A' },
    { n: 17, name: 'Ethan Zhao 赵梓淇', id: '000036', pos: 'CON', tel: '15521010536', remark: 'CON', ot: '10', al: '2',
      shifts: 'B B C AL AL A A A C C O PH O O A A B B C O O' },
    { n: 18, name: 'Kimi Yuan 袁宇嵘鸣', id: '000285', pos: 'Trainee', tel: '15180859212', remark: 'Trainee', ot: '0', al: '0', notes: 'J T U',
      shifts: 'O F F C C O F F B B O PH O O B B B B O O A A F F F O O A A A B' },
    { n: 19, name: 'Lena Tan 谭玲丽', id: '000279', pos: 'Trainee', tel: '19117661732', remark: 'Trainee', ot: '0', al: '0',
      shifts: 'C O O F F C O O F B C C O O F F F F F C O O A A B B B O B B C' }
];

const blanks = '<td class="blank ao"></td><td class="blank"></td>';
const add = (id, html) => document.getElementById(id).insertAdjacentHTML('beforeend', html);

// Columnas y letras
add('cols', '<col class="c-row">' + letters.map(l => `<col class="c-${widths[l] || 'day'}">`).join(''));
add('letters', letters.map(l => `<th class="${l === 'R' || l === 'S' ? 'sel' : ''}">${l}</th>`).join(''));

// Días, fechas y previsión
const names = ['Sun', 'Mon', 'Tue', 'Wed', 'Thu', 'Fri', 'Sat'];
const fill = (i) => i === 11 ? 'holiday' : (i % 7 === 0 || i % 7 === 6) ? 'weekend' : '';
add('days', dayLetters.map((l, i) => `<td class="day ${fill(i)}">${names[i % 7]}</td>`).join('') + blanks);
add('dates', dayLetters.map((l, i) => `<td class="date ${i === 11 ? 'holiday' : ''}">${i < 11 ? (21 + i) + '-Dec' : (i - 10) + '-Jan'}</td>`).join('') + blanks);
add('forecast', dayLetters.map((l, i) => `<td class="fc ${forecastErrors.includes(l) ? 'err' : ''}">${forecast[i]}</td>`).join('') + blanks);

// Marcas de copia y selección dentro de R15 y R16
function overlay(n, letter) {
    if (letter !== 'R') return '';
    if (n === 15) return '<i class="ants"></i>';
    if (n === 16) {
        return '<i class="selection"></i><button class="drop" aria-label="选择"><i class="caret"></i></button>' +
            '<button class="paste-options"><svg width="14" height="16" viewBox="0 0 14 16"><path d="M0 2h11v12H0z" fill="#edc57e"/><path d="M2.500 4V2h2a1.500 1.500 0 0 1 3 0h2v2z" fill="#777"/><path d="M6.500 6.500h4l3 3v6h-7z" fill="#fff" stroke="#777"/></svg>(Ctrl)<i class="caret"></i></button>';
    }
    return '';
}

function shiftCell(row, shift, i) {
    const letter = dayLetters[i];
    const classes = ['shift', 's-' + shift];
    if ((row.notes || '').split(' ').includes(letter)) classes.push('note');
    if (row.n === 16 && letter === 'S') classes.push('dim-cell');
    const extra = overlay(row.n, letter);
    if (extra) classes.push('anchor');
    return `<td class="${classes.join(' ')}">${shift}${extra}</td>`;
}

rows.forEach(row => {
    if (row.section) {
        add('roster', `<tr><th>${row.n}</th><td class="section" colspan="38">${row.section}</td><td class="blank"></td><td class="blank"></td></tr>`);
        return;
    }
    let cells = row.shifts.split(' ').map((s, i) => shiftCell(row, s, i)).join('');
    if (row.n === 17) cells += '<td class="left-team" colspan="10"></td>';
    add('roster', `<tr><th class="${row.n === 16 ? 'sel' : ''}">${row.n}</th><td>${row.name}</td><td class="err">${row.id}</td><td>${row.pos}</td><td>${row.tel}</td>` +
        `<td class="remark">${row.remark}</td><td class="num">${row.ot}</td><td class="num">${row.al}</td>${cells}<td class="blank"></td><td class="blank"></td></tr>`);
});

add('roster', '<tr class="r20"><th>20</th><td colspan="38"></td><td class="blank"></td><td class="blank"></td></tr>' +
    '<tr><th></th><td class="remarks" colspan="38"><b>Shift Remark （ KWEAP):</b>07003-A (07:00  —  03:30    )、  14301-B (03:30  —  23:00    )、  23003-C (11:00  —  07:30   )、  07007-D (07:00  —  07:00   )、  10003-E (07:00  —  07:00   )、  11007-F (11:00  —  08:00   )、  23003-G (08:00  —  06:00   )、 13000-H (12:00  —  21:00   )、</td><td class="blank"></td><td class="blank"></td></tr>');
```
